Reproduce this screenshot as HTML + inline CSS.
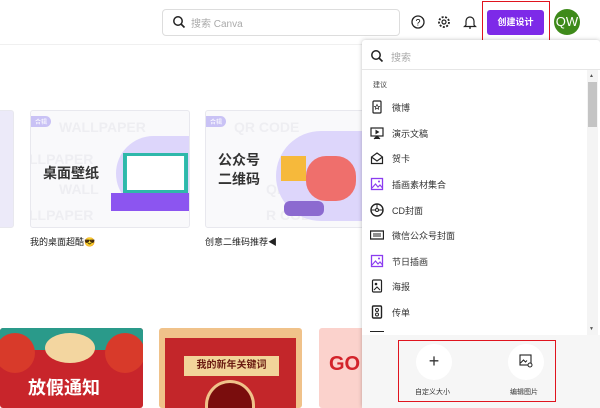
<!DOCTYPE html><html><head><meta charset="utf-8"><style>
*{margin:0;padding:0;box-sizing:border-box}
html,body{width:600px;height:408px;overflow:hidden}
body{background:#fff;font-family:"Liberation Sans","Noto Sans CJK SC",sans-serif;position:relative;font-size:9px;color:#222}
.a{position:absolute}
.card{position:absolute;border:1px solid #e8e8ee;border-radius:3px;background:#f9f9fb;overflow:hidden}
.tag{position:absolute;left:0;top:5px;background:#c9c2f5;color:#fff;font-size:6px;padding:1px 4px;border-radius:0 6px 6px 0}
.wm{position:absolute;color:#eeeef2;font-weight:bold;font-size:14px;white-space:nowrap}
.item{position:absolute;left:370px;height:20px;display:flex;align-items:center;font-size:9px;color:#333}
.item svg{width:14px;height:14px;margin-right:8px}
</style></head><body>
<div class="a" style="left:0;top:44px;width:600px;height:1px;background:#f0f0f0"></div>
<div class="a" style="left:162px;top:9px;width:238px;height:27px;border:1px solid #ddd;border-radius:4px"></div>
<svg class="a" style="left:172px;top:15px" width="14" height="14" viewBox="0 0 14 14"><circle cx="6" cy="6" r="4.2" fill="none" stroke="#222" stroke-width="1.5"/><path d="M9 9l3.5 3.5" stroke="#222" stroke-width="1.6"/></svg>
<div class="a" style="left:191px;top:15px;color:#aaa;font-size:10px">搜索 Canva</div>
<svg class="a" style="left:411px;top:15px" width="14" height="14"><circle cx="7" cy="7" r="6" fill="none" stroke="#222" stroke-width="1.3"/><text x="7" y="10.5" font-size="9" text-anchor="middle" font-family="Liberation Sans">?</text></svg>
<svg class="a" style="left:437px;top:15px" width="14" height="14"><circle cx="7" cy="7" r="5" fill="none" stroke="#222" stroke-width="1.8" stroke-dasharray="2 1.5"/><circle cx="7" cy="7" r="2" fill="none" stroke="#222" stroke-width="1.2"/></svg>
<svg class="a" style="left:463px;top:14px" width="14" height="16"><path d="M3 11V7a4 4 0 0 1 8 0v4l1.5 1.5h-11z M6 14h2" fill="none" stroke="#222" stroke-width="1.2"/></svg>
<div class="a" style="left:482px;top:1px;width:68px;height:40px;border:1.5px solid #e0141e"></div>
<div class="a" style="left:487px;top:10px;width:57px;height:25px;background:#7d2ae8;border-radius:3px;color:#fff;font-size:9px;font-weight:bold;text-align:center;line-height:25px">创建设计</div>
<div class="a" style="left:554px;top:9px;width:26px;height:26px;border-radius:50%;background:#3e8a1a;color:#fff;font-size:13px;text-align:center;line-height:26px">QW</div>

<div class="card" style="left:-5px;top:110px;width:19px;height:118px;background:#eceaf9"></div>
<div class="card" style="left:30px;top:110px;width:160px;height:118px">
<div class="wm" style="left:28px;top:8px">WALLPAPER</div><div class="wm" style="left:-2px;top:40px">LLPAPER</div><div class="wm" style="left:28px;top:70px">WALL</div><div class="wm" style="left:-2px;top:96px">LLPAPER</div>
<div class="tag">合辑</div>
<div class="a" style="left:12px;top:52px;font-size:14px;font-weight:bold;color:#333">桌面壁纸</div>
<div class="a" style="left:85px;top:25px;width:80px;height:75px;background:#ddd6fb;border-radius:40px 0 0 40px"></div>
<div class="a" style="left:92px;top:42px;width:65px;height:40px;background:#32bfb0;border:3px solid #2fb8aa"></div>
<div class="a" style="left:96px;top:45px;width:57px;height:34px;background:#fff"></div>
<div class="a" style="left:80px;top:82px;width:80px;height:18px;background:#8c55f0"></div>
</div>
<div class="card" style="left:205px;top:110px;width:160px;height:118px">
<div class="wm" style="left:28px;top:8px">QR CODE</div><div class="wm" style="left:60px;top:70px">QR C</div><div class="wm" style="left:60px;top:96px">R CODE</div>
<div class="tag">合辑</div>
<div class="a" style="left:12px;top:40px;font-size:14px;font-weight:bold;color:#333;line-height:19px">公众号<br>二维码</div>
<div class="a" style="left:70px;top:20px;width:90px;height:90px;background:#ddd6fb;border-radius:45px 0 0 45px"></div>
<div class="a" style="left:75px;top:45px;width:25px;height:25px;background:#f6b93b"></div>
<div class="a" style="left:100px;top:45px;width:50px;height:45px;background:#ef6f6c;border-radius:20px"></div>
<div class="a" style="left:78px;top:90px;width:40px;height:15px;background:#8c6ad0;border-radius:6px"></div>
</div>
<div class="a" style="left:30px;top:235px;font-size:9px">我的桌面超酷😎</div>
<div class="a" style="left:205px;top:235px;font-size:9px">创意二维码推荐◀</div>

<div class="a" style="left:0;top:328px;width:143px;height:80px;background:#c8252b;border-radius:3px;overflow:hidden">
<div class="a" style="left:0;top:0;width:143px;height:22px;background:#2a9a8a"></div>
<div class="a" style="left:-5px;top:5px;width:40px;height:40px;border-radius:50%;background:#d83a2a"></div>
<div class="a" style="left:105px;top:5px;width:40px;height:40px;border-radius:50%;background:#d83a2a"></div>
<div class="a" style="left:45px;top:5px;width:50px;height:30px;border-radius:50%;background:#f3d6a0"></div>
<div class="a" style="left:28px;top:46px;color:#fff;font-size:18px;font-weight:bold">放假通知</div></div>
<div class="a" style="left:159px;top:328px;width:143px;height:80px;background:#f0c28a;border-radius:3px;overflow:hidden">
<div class="a" style="left:6px;top:10px;width:131px;height:70px;background:#c3262a"></div>
<div class="a" style="left:25px;top:28px;width:95px;height:20px;background:#f2d49a;color:#6a1a10;font-size:10px;text-align:center;line-height:20px;font-weight:bold">我的新年关键词</div>
<div class="a" style="left:46px;top:52px;width:50px;height:28px;border-radius:25px 25px 0 0;background:#7a0d0d;border:3px solid #f0c28a;border-bottom:0"></div></div>
<div class="a" style="left:319px;top:328px;width:50px;height:80px;background:#fbd2cc;border-radius:3px;overflow:hidden"><div class="a" style="left:10px;top:25px;color:#d3232a;font-weight:bold;font-size:20px">GO</div></div>

<div class="a" style="left:362px;top:40px;width:238px;height:368px;background:#fff;box-shadow:0 0 4px rgba(0,0,0,.25);border-radius:3px"></div>
<svg class="a" style="left:370px;top:49px" width="14" height="14"><circle cx="6" cy="6" r="4.2" fill="none" stroke="#222" stroke-width="1.5"/><path d="M9 9l3.5 3.5" stroke="#222" stroke-width="1.6"/></svg>
<div class="a" style="left:391px;top:49px;color:#aaa;font-size:10px">搜索</div>
<div class="a" style="left:362px;top:69px;width:238px;height:1px;background:#e6e6e6"></div>
<div class="a" style="left:373px;top:80px;font-size:7px;color:#444">建议</div>
<div class="item" style="top:97px"><svg viewBox="0 0 14 14"><rect x="3" y="1" width="8" height="12" rx="1" fill="none" stroke="#222" stroke-width="1.2"/><path d="M7 4.5l.8 1.7 1.7.2-1.3 1.1.4 1.7L7 8.3l-1.6.9.4-1.7-1.3-1.1 1.7-.2z" fill="none" stroke="#222" stroke-width=".7"/></svg>微博</div>
<div class="item" style="top:123px"><svg viewBox="0 0 14 14"><rect x="1" y="2" width="12" height="8" fill="none" stroke="#222" stroke-width="1.2"/><path d="M6 4.5v3l2.5-1.5z M4 13l3-3 3 3" fill="#222" stroke="#222" stroke-width="1"/></svg>演示文稿</div>
<div class="item" style="top:148px"><svg viewBox="0 0 14 14"><path d="M1.5 6v6.5h11V6L7 2z M1.5 6L7 10l5.5-4" fill="none" stroke="#222" stroke-width="1.2"/></svg>贺卡</div>
<div class="item" style="top:174px"><svg viewBox="0 0 14 14"><rect x="1.5" y="1.5" width="11" height="11" fill="none" stroke="#8b3cf0" stroke-width="1.3"/><path d="M2 11l3.5-4 2.5 3 2-2 2.5 3" fill="none" stroke="#8b3cf0" stroke-width="1.1"/><circle cx="9" cy="4.5" r="1" fill="#8b3cf0"/></svg>插画素材集合</div>
<div class="item" style="top:200px"><svg viewBox="0 0 14 14"><circle cx="7" cy="7" r="6" fill="none" stroke="#222" stroke-width="1.4"/><circle cx="7" cy="7" r="1.5" fill="none" stroke="#222"/><path d="M1 7h4.5M8.5 7H13M7 1v4.5" stroke="#222"/></svg>CD封面</div>
<div class="item" style="top:225px"><svg viewBox="0 0 14 14"><rect x="0.5" y="3" width="13" height="8" fill="none" stroke="#222" stroke-width="1.3"/><path d="M3 6h8M3 8h8" stroke="#222"/></svg>微信公众号封面</div>
<div class="item" style="top:251px"><svg viewBox="0 0 14 14"><rect x="1.5" y="1.5" width="11" height="11" fill="none" stroke="#8b3cf0" stroke-width="1.3"/><path d="M2 11l3.5-4 2.5 3 2-2 2.5 3" fill="none" stroke="#8b3cf0" stroke-width="1.1"/><circle cx="9" cy="4.5" r="1" fill="#8b3cf0"/></svg>节日插画</div>
<div class="item" style="top:276px"><svg viewBox="0 0 14 14"><rect x="2.5" y="1" width="9" height="12" rx="1" fill="none" stroke="#222" stroke-width="1.2"/><circle cx="6" cy="5" r="1.3" fill="#222"/><path d="M4 11l3-3 3 3" fill="none" stroke="#222"/></svg>海报</div>
<div class="item" style="top:302px"><svg viewBox="0 0 14 14"><rect x="2.5" y="1" width="9" height="12" rx="1" fill="none" stroke="#222" stroke-width="1.4"/><circle cx="7" cy="5" r="1.5" fill="none" stroke="#222"/><circle cx="7" cy="9.5" r="1.5" fill="none" stroke="#222"/></svg>传单</div>
<div class="a" style="left:370px;top:331px;width:14px;height:4px;border-top:1.4px solid #222"></div>
<div class="a" style="left:587px;top:70px;width:11px;height:266px;background:#f4f4f4"></div>
<div class="a" style="left:588px;top:82px;width:9px;height:45px;background:#c4c4c4"></div>
<div class="a" style="left:589px;top:73px;font-size:5px;color:#555">▲</div>
<div class="a" style="left:589px;top:326px;font-size:5px;color:#555">▼</div>
<div class="a" style="left:362px;top:335px;width:238px;height:73px;background:#f6f6f6"></div>
<div class="a" style="left:398px;top:340px;width:158px;height:62px;border:1.5px solid #e0141e"></div>
<div class="a" style="left:416px;top:344px;width:36px;height:36px;border-radius:50%;background:#fff;text-align:center;line-height:34px;font-size:18px;color:#333;font-weight:300">+</div>
<div class="a" style="left:508px;top:344px;width:36px;height:36px;border-radius:50%;background:#fff"></div>
<svg class="a" style="left:519px;top:354px" width="14" height="14"><rect x="1" y="1" width="11" height="10" fill="none" stroke="#222" stroke-width="1.1"/><path d="M1.5 9l3-3 2 2 1.5-1.5" fill="none" stroke="#222"/><circle cx="11" cy="11" r="2" fill="#fff" stroke="#222"/></svg>
<div class="a" style="left:415px;top:387px;font-size:7px;color:#333">自定义大小</div>
<div class="a" style="left:510px;top:387px;font-size:7px;color:#333">编辑图片</div>
</body></html>
